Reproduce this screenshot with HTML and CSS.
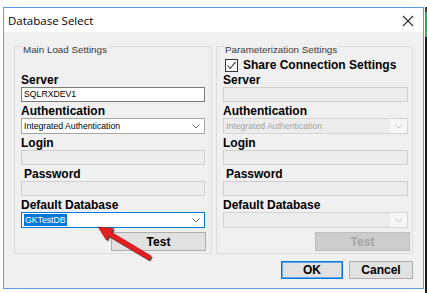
FILE: index.html
```html
<!DOCTYPE html>
<html>
<head>
  <title>Database Select</title>
  <link rel="stylesheet" href="styles.css">
</head>
<body>
  <div class="screen">
    <div class="window">
      <div class="titlebar">
        <span class="title">Database Select</span>
        <svg class="close" width="12" height="12" viewBox="0 0 12 12">
          <path d="M1 1 L11 11 M11 1 L1 11" stroke="#2b2b2b" stroke-width="1.1" fill="none"/>
        </svg>
      </div>
      <div class="client">
        <div class="groups">
          <div class="group group-left">
            <div class="group-title">Main Load Settings</div>
            <div class="field first">
              <div class="label">Server</div>
              <div class="input">SQLRXDEV1</div>
            </div>
            <div class="field">
              <div class="label">Authentication</div>
              <div class="combo">
                <span class="combo-text">Integrated Authentication</span>
                <span class="combo-btn"><svg width="8" height="5" viewBox="0 0 8 5"><path d="M0.5 0.5 L4 4 L7.5 0.5" stroke="#6d6d6d" fill="none"/></svg></span>
              </div>
            </div>
            <div class="field">
              <div class="label">Login</div>
              <div class="input disabled"></div>
            </div>
            <div class="field">
              <div class="label indent">Password</div>
              <div class="input disabled"></div>
            </div>
            <div class="field">
              <div class="label">Default Database</div>
              <div class="combo focused">
                <span class="combo-text"><span class="sel">GKTestDB</span></span>
                <span class="combo-btn"><svg width="8" height="5" viewBox="0 0 8 5"><path d="M0.5 0.5 L4 4 L7.5 0.5" stroke="#6d6d6d" fill="none"/></svg></span>
              </div>
            </div>
            <div class="btn-row">
              <button class="btn btn-test">Test</button>
            </div>
          </div>
          <div class="group group-right">
            <div class="group-title">Parameterization Settings</div>
            <div class="check-row">
              <span class="checkbox"><svg width="11" height="11" viewBox="0 0 11 11"><path d="M1.5 5.5 L4.2 8.5 L9.5 1.8" stroke="#333" stroke-width="1.1" fill="none"/></svg></span>
              <span class="check-label">Share Connection Settings</span>
            </div>
            <div class="field">
              <div class="label">Server</div>
              <div class="input disabled"></div>
            </div>
            <div class="field">
              <div class="label">Authentication</div>
              <div class="combo disabled">
                <span class="combo-text">Integrated Authentication</span>
                <span class="combo-btn"><svg width="8" height="5" viewBox="0 0 8 5"><path d="M0.5 0.5 L4 4 L7.5 0.5" stroke="#c4c4c4" fill="none"/></svg></span>
              </div>
            </div>
            <div class="field">
              <div class="label">Login</div>
              <div class="input disabled"></div>
            </div>
            <div class="field">
              <div class="label indent">Password</div>
              <div class="input disabled"></div>
            </div>
            <div class="field">
              <div class="label">Default Database</div>
              <div class="combo disabled">
                <span class="combo-text"></span>
                <span class="combo-btn"><svg width="8" height="5" viewBox="0 0 8 5"><path d="M0.5 0.5 L4 4 L7.5 0.5" stroke="#c4c4c4" fill="none"/></svg></span>
              </div>
            </div>
            <div class="btn-row">
              <button class="btn btn-test btn-disabled" disabled>Test</button>
            </div>
          </div>
        </div>
        <div class="actions">
          <button class="btn btn-ok">OK</button>
          <button class="btn btn-cancel">Cancel</button>
        </div>
      </div>
    </div>
    <div class="edge">
      <div class="edge-top"></div>
      <div class="edge-green"></div>
      <div class="edge-dark"></div>
    </div>
    <svg class="arrow" width="427" height="293" viewBox="0 0 427 293">
      <polygon points="99.5,228.5 115.1,229.7 112.8,233.6 152.8,257.4 150.2,261.6 110.2,237.8 107.9,241.7" fill="#3a1d1d" opacity="0.75"/>
      <polygon points="98,227 113.6,228.2 111.3,232.1 151.3,255.9 148.7,260.1 108.7,236.3 106.4,240.2" fill="#e3201f" stroke="#9a1414" stroke-width="0.5"/>
    </svg>
  </div>
</body>
</html>
```

FILE: styles.css
```css
body {
  margin: 0;
  background: #ffffff;
  font-family: "Liberation Sans", Arial, sans-serif;
}
.screen {
  position: relative;
  width: 427px;
  height: 293px;
  display: flex;
  align-items: flex-start;
  padding: 7px 0 0 3px;
  box-sizing: border-box;
  overflow: hidden;
}
.window {
  width: 421px;
  height: 282px;
  box-sizing: border-box;
  border: 1px solid #5e9fe0;
  display: flex;
  flex-direction: column;
}
.titlebar {
  height: 24px;
  flex: none;
  background: #ffffff;
  display: flex;
  align-items: center;
  justify-content: space-between;
  padding: 0 9px 0 4px;
}
.title {
  font-family: "Open Sans", sans-serif;
  font-size: 11.5px;
  color: #000000;
}
.close {
  display: block;
  margin-top: 1px;
}
.client {
  flex: 1;
  background: #f0f0f0;
  padding: 14px 10px 0 10px;
}
.groups {
  display: grid;
  grid-template-columns: 198px 197px;
  column-gap: 4px;
}
.group {
  border: 1px solid #dcdcdc;
  padding: 0 6px 2px 6px;
}
.group-right {
  padding-right: 4px;
}
.group-title {
  width: fit-content;
  margin: -3px 0 0 1px;
  padding: 0 1px;
  background: #f0f0f0;
  font-size: 9.8px;
  line-height: 12px;
  color: #3a3a3a;
}
.field {
  margin-bottom: 4px;
}
.field.first {
  margin-top: 19px;
}
.label {
  font-size: 12px;
  font-weight: bold;
  line-height: 11px;
  margin-bottom: 1px;
  color: #000000;
}
.label.indent {
  margin-left: 3px;
}
.input {
  height: 15px;
  box-sizing: border-box;
  border: 1px solid #7a7a7a;
  background: #ffffff;
  font-size: 8.7px;
  line-height: 13px;
  padding-left: 2px;
  color: #000000;
}
.input.disabled {
  border-color: #cfcfcf;
  background: #ececec;
}
.combo {
  height: 16px;
  box-sizing: border-box;
  border: 1px solid #a6a6a6;
  background: #ffffff;
  display: flex;
  font-size: 8.7px;
  line-height: 14px;
}
.combo.focused {
  border-color: #0078d7;
}
.combo-text {
  flex: 1;
  padding-left: 2px;
  color: #000000;
}
.combo-btn {
  width: 17px;
  display: flex;
  align-items: center;
  justify-content: center;
}
.combo.disabled {
  border-color: #d5d5d5;
  background: #ececec;
}
.combo.disabled .combo-text {
  color: #a2a2a2;
}
.combo.disabled .combo-btn {
  background: #f6f6f6;
}
.sel {
  background: #0078d7;
  color: #ffffff;
  padding: 0 1px;
  display: inline-block;
  line-height: 12px;
}
.check-row {
  display: flex;
  align-items: center;
  height: 14px;
  margin: 2px 0 3px 2px;
}
.checkbox {
  width: 13px;
  height: 13px;
  box-sizing: border-box;
  border: 1px solid #333333;
  background: #ffffff;
  display: flex;
  align-items: center;
  justify-content: center;
  margin-right: 5px;
}
.check-label {
  font-size: 12px;
  font-weight: bold;
  color: #000000;
}
.btn-row {
  display: flex;
  justify-content: flex-end;
  margin-top: 3px;
}
.btn {
  font-family: "Liberation Sans", Arial, sans-serif;
  font-size: 12px;
  font-weight: bold;
  color: #000000;
  background: #e1e1e1;
  border: 1px solid #adadad;
  padding: 0;
  height: 19px;
}
.btn-test {
  width: 95px;
  margin-right: -1px;
}
.group-right .btn-test {
  margin-right: -2px;
}
.btn-disabled {
  background: #cccccc;
  border-color: #bfbfbf;
  color: #a3a3a3;
}
.actions {
  display: flex;
  justify-content: flex-end;
  gap: 6px;
  margin-top: 7px;
}
.btn-ok {
  width: 62px;
  height: 18px;
  border-color: #0078d7;
  box-shadow: inset 0 0 0 1px #66a9e6;
}
.btn-cancel {
  width: 64px;
  height: 18px;
}
.edge {
  flex: 1;
  height: 286px;
  margin-left: 1px;
  display: flex;
  flex-direction: column;
}
.edge-top {
  height: 5px;
  background: #4a3522;
}
.edge-green {
  height: 25px;
  background: #27b34a;
}
.edge-dark {
  flex: 1;
  background: #1c1c1c;
}
.arrow {
  position: absolute;
  left: 0;
  top: 0;
  pointer-events: none;
}
```
